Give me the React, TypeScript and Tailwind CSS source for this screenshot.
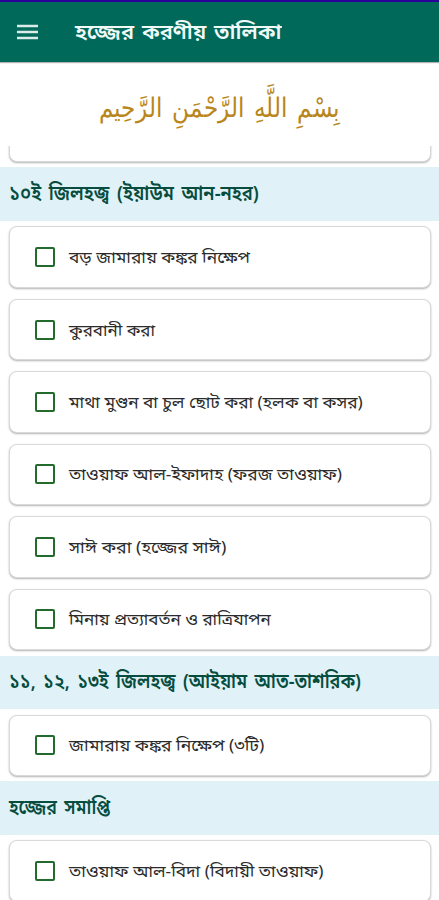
import React from 'react';

interface Section {
  title: string;
  titleWidth: number;
  items: { label: string; width: number }[];
}

const sections: Section[] = [
  {
    title: '১০ই জিলহজ্ব (ইয়াউম আন-নহর)',
    titleWidth: 250,
    items: [
      { label: 'বড় জামারায় কঙ্কর নিক্ষেপ', width: 181 },
      { label: 'কুরবানী করা', width: 86 },
      { label: 'মাথা মুণ্ডন বা চুল ছোট করা (হলক বা কসর)', width: 294 },
      { label: 'তাওয়াফ আল-ইফাদাহ (ফরজ তাওয়াফ)', width: 273 },
      { label: 'সাঈ করা (হজ্জের সাঈ)', width: 157 },
      { label: 'মিনায় প্রত্যাবর্তন ও রাত্রিযাপন', width: 202 },
    ],
  },
  {
    title: '১১, ১২, ১৩ই জিলহজ্ব (আইয়াম আত-তাশরিক)',
    titleWidth: 352,
    items: [{ label: 'জামারায় কঙ্কর নিক্ষেপ (৩টি)', width: 195 }],
  },
  {
    title: 'হজ্জের সমাপ্তি',
    titleWidth: 101,
    items: [{ label: 'তাওয়াফ আল-বিদা (বিদায়ী তাওয়াফ)', width: 255 }],
  },
];

interface FitTextProps {
  text: string;
  width: number;
  className?: string;
}

/**
 * One line of text, scaled sideways to the given width
 */
const FitText: React.FC<FitTextProps> = ({ text, width, className }) => {
  const ref = React.useRef<HTMLSpanElement>(null);
  const [scale, setScale] = React.useState(1);

  React.useLayoutEffect(() => {
    if (ref.current) setScale(width / ref.current.offsetWidth);
  }, [text, width]);

  return (
    <span
      ref={ref}
      className={`inline-block shrink-0 whitespace-nowrap ${className ?? ''}`}
      style={{ transform: `scaleX(${scale})` }}
    >
      {text}
    </span>
  );
};

const Card: React.FC<{ children?: React.ReactNode }> = ({ children }) => (
  <div className="mr-2 ml-[9px] my-[5.6px] flex h-[61.3px] items-center rounded-[8px] border-[1.5px] border-[#d9d9d9] bg-white pl-[25px] shadow-[0_1px_2px_rgba(0,0,0,0.3)]">
    {children}
  </div>
);

export default function App() {
  return (
    <div className="flex h-[900px] w-full flex-col overflow-hidden bg-white font-['Noto_Sans','Noto_Sans_Bengali',sans-serif]">
      <header className="flex h-[62px] shrink-0 items-center border-t-2 border-[#2a009b] bg-[#00695a] pl-[17px] shadow-[0_1px_1px_rgba(0,0,0,0.3)]">
        <svg width="21" height="16" viewBox="0 0 21 16" className="mr-[37px] shrink-0">
          <path d="M0 2h21M0 8h21M0 14h21" stroke="#d9ece8" strokeWidth="2.6" />
        </svg>
        <FitText
          text="হজ্জের করণীয় তালিকা"
          width={207}
          className="origin-left text-[21px] font-semibold text-[#f0faf8] [word-spacing:2px]"
        />
      </header>

      <div className="flex h-[84px] shrink-0 items-center justify-center pt-1.5" dir="rtl">
        <FitText
          text="بِسْمِ اللَّهِ الرَّحْمَنِ الرَّحِيم"
          width={241}
          className="origin-center text-[27px] text-[#b8861b] [word-spacing:4px]"
        />
      </div>

      <main className="flex min-h-0 flex-1 flex-col overflow-hidden">
        <div className="-mt-[51px] shrink-0">
          <Card />
          {sections.map((section) => (
            <section key={section.title}>
              <h2 className="flex h-[53.3px] items-center bg-[#e0f1f7] pb-[2px] pl-[9px]">
                <FitText
                  text={section.title}
                  width={section.titleWidth}
                  className="origin-left text-[20px] font-semibold text-[#064d40] [word-spacing:3px]"
                />
              </h2>
              <div className="flow-root">
                {section.items.map((item) => (
                  <div key={item.label} className="flow-root">
                    <Card>
                      <span className="mr-[14px] size-5 shrink-0 rounded-[2px] border-2 border-[#226b2c]" />
                      <FitText text={item.label} width={item.width} className="origin-left text-[16px] text-[#2b2b2b]" />
                    </Card>
                  </div>
                ))}
              </div>
            </section>
          ))}
        </div>
      </main>
    </div>
  );
}
